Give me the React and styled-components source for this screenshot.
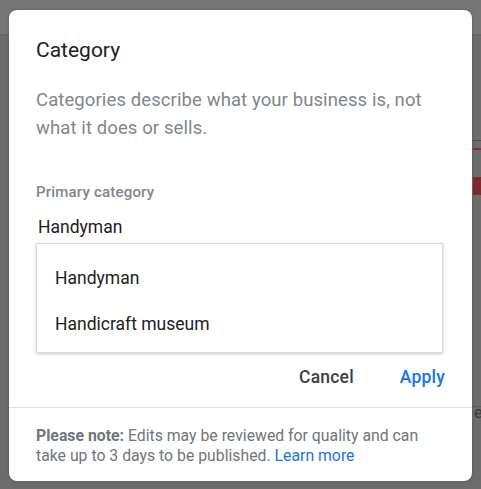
import React from 'react';
import styled, { createGlobalStyle } from 'styled-components';

const blue = '#1a73e8';
const grey = '#80868b';
const ink = '#202124';

const GlobalStyle = createGlobalStyle`
  html, body {
    margin: 0;
    padding: 0;
    background: #6c6c6c;
    font-family: Roboto, "Noto Sans", Arial, sans-serif;
  }
`;

// dimmed page behind the dialog
const Backdrop = styled.div`
  position: relative;
  width: 481px;
  height: 489px;
  overflow: hidden;
  background: linear-gradient(#767676 0, #767676 34px, #5f5f5f 34px, #6c6c6c 36px, #6c6c6c 100%);
  padding-top: 10px;
  box-sizing: border-box;
`;

const PageBit = styled.div`
  position: absolute;
  left: ${p => p.x}px;
  top: ${p => p.y}px;
  width: ${p => p.w}px;
  height: ${p => p.h}px;
  background: ${p => p.bg};
`;

const PageText = styled.span`
  position: absolute;
  left: 474px;
  top: 403px;
  font-size: 16px;
  color: #3a3a3a;
`;

const Dialog = styled.div`
  position: relative;
  margin-left: 9px;
  width: 463px;
  height: 471px;
  background: #fff;
  border-radius: 8px;
  box-shadow: 0 0 3px rgba(0, 0, 0, 0.25);
  display: flex;
  flex-direction: column;
  overflow: hidden;
`;

const Body = styled.div`
  padding: 26px 28px 0 27px;
  display: flex;
  flex-direction: column;
`;

const Title = styled.h2`
  margin: 0;
  font-size: 21px;
  line-height: 28px;
  font-weight: 400;
  color: ${ink};
`;

const Description = styled.p`
  margin: 22px 0 0;
  font-size: 18.5px;
  line-height: 28px;
  letter-spacing: 0.1px;
  color: ${grey};
`;

const Label = styled.div`
  margin-top: 40px;
  font-size: 15px;
  line-height: 20px;
  font-weight: 500;
  letter-spacing: 0.2px;
  color: ${grey};
`;

const Value = styled.div`
  margin-top: 14px;
  padding-left: 2px;
  font-size: 17.5px;
  line-height: 22px;
  color: ${ink};
`;

const Menu = styled.ul`
  list-style: none;
  margin: 5px 0 0;
  padding: 11px 0 5px;
  width: 407px;
  height: 110px;
  box-sizing: border-box;
  border: 1px solid #dadce0;
  box-shadow: 0 1px 3px rgba(0, 0, 0, 0.22);
  display: flex;
  flex-direction: column;
`;

const MenuItem = styled.li`
  padding: 0 18px;
  height: 46px;
  flex: none;
  display: flex;
  align-items: center;
  font-size: 17.5px;
  color: ${ink};
`;

const Actions = styled.div`
  display: flex;
  justify-content: flex-end;
  gap: 46px;
  margin-top: 13px;
  margin-right: -1px;
  height: 22px;
`;

const TextButton = styled.button`
  border: none;
  background: transparent;
  padding: 0;
  font-family: inherit;
  font-size: 17.5px;
  font-weight: 500;
  letter-spacing: 0.2px;
  color: ${p => (p.primary ? blue : '#3c4043')};
`;

const Footer = styled.div`
  margin-top: auto;
  border-top: 1px solid #e0e0e0;
  padding: 18px 40px 15px 27px;
  font-size: 15.8px;
  line-height: 20px;
  color: #70757a;
`;

const Strong = styled.b`
  font-weight: 700;
`;

const Link = styled.a`
  color: ${blue};
  text-decoration: none;
`;

export default function App() {
  return (
    <>
      <GlobalStyle />
      <Backdrop>
        <PageBit x={473} y={140} w={8} h={1} bg="#505050" />
        <PageBit x={473} y={148} w={8} h={2} bg="#8a3030" />
        <PageBit x={473} y={177} w={8} h={18} bg="#7b2b2b" />
        <PageBit x={473} y={406} w={8} h={1} bg="#5a5a5a" />
        <PageText>er</PageText>
        <Dialog>
          <Body>
            <Title>Category</Title>
            <Description>
              Categories describe what your business is, not what it does or sells.
            </Description>
            <Label>Primary category</Label>
            <Value>Handyman</Value>
            <Menu>
              <MenuItem>Handyman</MenuItem>
              <MenuItem>Handicraft museum</MenuItem>
            </Menu>
            <Actions>
              <TextButton>Cancel</TextButton>
              <TextButton primary>Apply</TextButton>
            </Actions>
          </Body>
          <Footer>
            <Strong>Please note:</Strong> Edits may be reviewed for quality and can take up to 3 days to be published.{' '}
            <Link href="#">Learn more</Link>
          </Footer>
        </Dialog>
      </Backdrop>
    </>
  );
}
